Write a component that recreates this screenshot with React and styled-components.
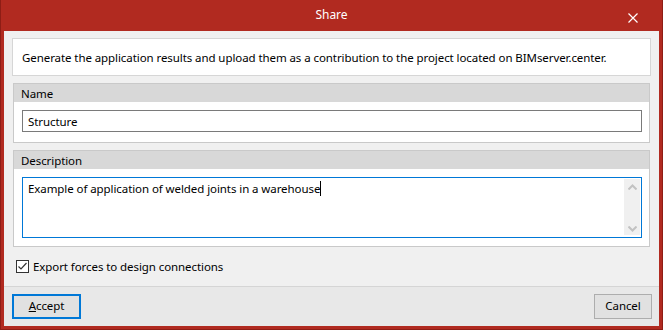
import React from 'react';
import styled, { createGlobalStyle } from 'styled-components';

const GlobalStyle = createGlobalStyle`
  html, body {
    margin: 0;
    padding: 0;
    background: #b12a20;
  }
  body {
    font-family: "Noto Sans", "Open Sans", Arial, sans-serif;
    font-size: 11.5px;
    letter-spacing: -0.08px;
    color: #000;
  }
`;

const Window = styled.div`
  width: 663px;
  height: 330px;
  box-sizing: border-box;
  background: #b12a20;
  border: 1px solid #8e1d15;
  border-top: none;
  padding: 0 3px 3px;
  display: flex;
  flex-direction: column;
`;

const TitleBar = styled.div`
  height: 31px;
  flex-shrink: 0;
  display: flex;
  align-items: center;
  justify-content: center;
  position: relative;
  color: #fff;
  font-size: 12px;
  padding-bottom: 2px;
  box-sizing: border-box;
`;

const CloseButton = styled.div`
  position: absolute;
  right: 21px;
  top: 13px;
  width: 10px;
  height: 10px;
  display: flex;
`;

const Content = styled.div`
  flex: 1;
  background: #f0f0f0;
  display: flex;
  flex-direction: column;
`;

const Main = styled.div`
  flex: 1;
  padding: 7px 8px 0;
  display: flex;
  flex-direction: column;
  gap: 7px;
`;

const InfoBox = styled.div`
  height: 36px;
  background: #fff;
  border: 1px solid #d6d6d6;
  display: flex;
  align-items: center;
  padding-left: 9px;
`;

const Group = styled.div`
  margin: 0 1px;
  border: 1px solid #c9c9c9;
  background: #fff;
`;

const GroupHeader = styled.div`
  height: 18px;
  background: #d8d8d8;
  padding-left: 7px;
  display: flex;
  align-items: center;
`;

const GroupBody = styled.div`
  padding: 8px 7px ${p => p.$bottom}px 8px;
`;

const TextInput = styled.div`
  height: 20px;
  border: 1px solid #7a7a7a;
  display: flex;
  align-items: center;
  padding-left: 5px;
`;

const TextArea = styled.div`
  height: 59px;
  border: 1px solid #0078d7;
  display: flex;
`;

const TextAreaText = styled.div`
  flex: 1;
  padding: 3px 0 0 5px;
  line-height: 16px;
`;

const Caret = styled.span`
  display: inline-block;
  width: 1px;
  height: 15px;
  background: #000;
  vertical-align: -3px;
`;

const ScrollBar = styled.div`
  width: 16px;
  margin: 1px 1px 2px 0;
  background: #f0f0f0;
  display: flex;
  flex-direction: column;
  justify-content: space-between;
  align-items: center;
  padding: 5px 0 3px;
  box-sizing: border-box;
`;

const CheckRow = styled.label`
  display: flex;
  align-items: center;
  gap: 4px;
  margin-top: 5px;
  padding-left: 4px;
`;

const CheckBox = styled.span`
  width: 11px;
  height: 11px;
  border: 1px solid #333;
  background: #fff;
  display: flex;
  align-items: center;
  justify-content: center;
`;

const Footer = styled.div`
  height: 40px;
  box-sizing: border-box;
  border-top: 1px solid #d5d5d5;
  background: #e8e8e8;
  display: flex;
  justify-content: space-between;
  align-items: flex-start;
  padding: 7px 7px 0 8px;
`;

const Button = styled.button`
  font: inherit;
  letter-spacing: inherit;
  color: #000;
  height: 25px;
  width: ${p => p.$width}px;
  box-sizing: border-box;
  background: #e1e1e1;
  border: ${p => (p.$primary ? '2px solid #0078d7' : '1px solid #adadad')};
  padding: 0 0 2px;
  display: flex;
  align-items: center;
  justify-content: center;
`;

const Chevron = ({ up }) => (
  <svg width="9" height="6" viewBox="0 0 9 6">
    <path
      d={up ? 'M0.5 5.5 L4.5 1.5 L8.5 5.5' : 'M0.5 0.5 L4.5 4.5 L8.5 0.5'}
      fill="none"
      stroke="#c2c2c2"
      strokeWidth="2"
    />
  </svg>
);

const App = () => (
  <>
    <GlobalStyle />
    <Window>
      <TitleBar>
        Share
        <CloseButton>
          <svg width="10" height="10" viewBox="0 0 10 10">
            <path d="M0.5 0.5 L9.5 9.5 M9.5 0.5 L0.5 9.5" stroke="#fff" strokeWidth="1.2" />
          </svg>
        </CloseButton>
      </TitleBar>
      <Content>
        <Main>
          <InfoBox>
            Generate the application results and upload them as a contribution to the project located on BIMserver.center.
          </InfoBox>
          <Group>
            <GroupHeader>Name</GroupHeader>
            <GroupBody $bottom={10}>
              <TextInput>Structure</TextInput>
            </GroupBody>
          </Group>
          <Group>
            <GroupHeader>Description</GroupHeader>
            <GroupBody $bottom={8}>
              <TextArea>
                <TextAreaText>
                  Example of application of welded joints in a warehouse<Caret />
                </TextAreaText>
                <ScrollBar>
                  <Chevron up />
                  <Chevron />
                </ScrollBar>
              </TextArea>
            </GroupBody>
          </Group>
          <CheckRow>
            <CheckBox>
              <svg width="11" height="11" viewBox="0 0 11 11">
                <path d="M1.5 5.5 L4 8 L9.5 2" fill="none" stroke="#333" strokeWidth="1.2" />
              </svg>
            </CheckBox>
            Export forces to design connections
          </CheckRow>
        </Main>
        <Footer>
          <Button $primary $width={69}>
            <u>A</u>ccept
          </Button>
          <Button $width={58}>Cancel</Button>
        </Footer>
      </Content>
    </Window>
  </>
);

export default App;
